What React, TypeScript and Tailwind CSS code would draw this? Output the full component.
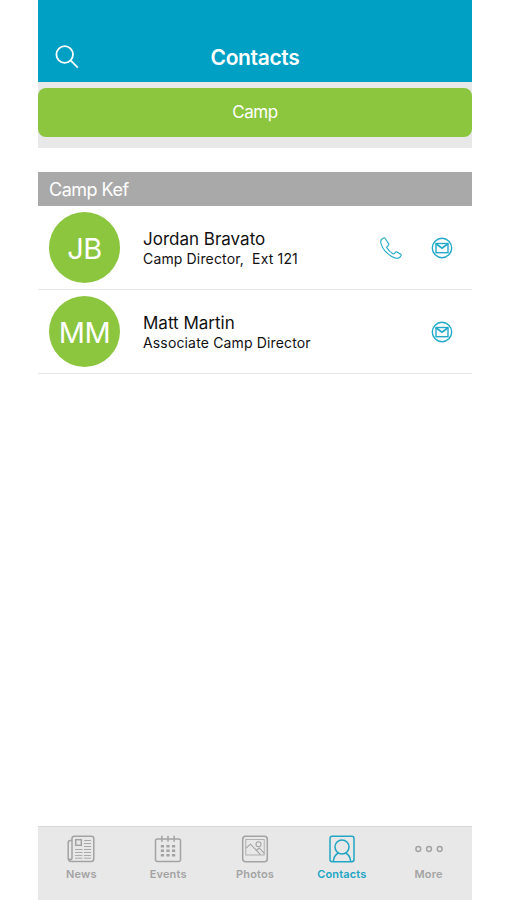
import type { ReactNode } from 'react';

type Contact = {
  initials: string;
  name: string;
  title: string;
  hasPhone: boolean;
};

const contacts: Contact[] = [
  { initials: 'JB', name: 'Jordan Bravato', title: 'Camp Director,  Ext 121', hasPhone: true },
  { initials: 'MM', name: 'Matt Martin', title: 'Associate Camp Director', hasPhone: false },
];

function SearchIcon() {
  return (
    <svg className="w-6 h-6" viewBox="0 0 24 24" fill="none" stroke="currentColor" strokeWidth="1.8">
      <circle cx="9.7" cy="9.5" r="8.3" />
      <path d="M15.6 15.4l7.2 7.2" />
    </svg>
  );
}

function PhoneIcon() {
  return (
    <svg className="w-[22px] h-[22px]" viewBox="0 0 22 22" fill="none" stroke="currentColor" strokeWidth="1.1" strokeLinejoin="round">
      <path d="M3.7.9C1.5 1.6.4 3.2.8 5.5c.7 3.6 3 7.4 5.9 10.2 2.5 2.4 5.8 4.6 8.8 5.4 2.3.6 4.5-.5 5.6-2.7.2-.5 0-.9-.4-1.2l-3.700-2.200c-.5-.3-1-.2-1.400.2l-1.300 1.500c-.4.400-.9.400-1.400.1-2.500-1.500-4.600-3.600-6-6-.3-.5-.2-1 .2-1.300l1.400-1.200c.4-.4.500-.9.200-1.400L5 1.300C4.700.9 4.200.7 3.700.9z" />
    </svg>
  );
}

function MailIcon() {
  return (
    <svg className="w-[22px] h-[22px]" viewBox="0 0 22 22" fill="none" stroke="currentColor" strokeWidth="1.4">
      <circle cx="11" cy="11" r="9.7" />
      <rect x="5" y="6.5" width="12" height="9.2" />
      <path d="M5 6.7l6 4.500 6-4.500" strokeWidth="1.7" />
    </svg>
  );
}

function NewsIcon() {
  return (
    <svg className="w-7 h-7" viewBox="0 0 28 28" fill="none" stroke="currentColor" strokeWidth="1.5">
      <path d="M5 5.5H3.2Q1.2 5.5 1.2 8v15.5a3 3 0 0 0 3 3H24q2.800 0 2.800-2.800V3.500Q26.800 1.200 24.500 1.200H7.400Q5 1.200 5 3.500v19.200a1.900 1.900 0 0 1-3.800 0" />
      <rect x="8.7" y="4.7" width="5.6" height="5.6" />
      <path d="M17 5.500h7M17 8.500h7M17 11.500h7M8 14.500h7.500M17 14.500h7M8 17.500h7.500M17 17.500h7M8 20.500h7.500M17 20.500h7M8 23.200h7.500M17 23.200h7" strokeWidth="0.9" />
    </svg>
  );
}

function EventsIcon() {
  return (
    <svg className="w-7 h-7" viewBox="0 0 28 28" fill="none" stroke="currentColor" strokeWidth="1.5">
      <rect x="1.5" y="4" width="25" height="22.5" rx="2" />
      <path d="M7.8.8v6M14 .8v6M20.2.8v6" />
      <path d="M6.800 11.200h3.200M12.400 11.200h3.200M18 11.200h3.200M6.800 15.700h3.200M12.400 15.700h3.200M18 15.700h3.200M6.800 20.200h3.200M12.400 20.200h3.200M18 20.200h3.200" strokeWidth="2.4" />
    </svg>
  );
}

function PhotosIcon() {
  return (
    <svg className="w-7 h-7" viewBox="0 0 28 28" fill="none" stroke="currentColor" strokeWidth="1.5">
      <rect x="1.7" y="1.2" width="24.6" height="25.6" rx="3" />
      <rect x="4.8" y="4.5" width="18.4" height="15.5" strokeWidth="0.8" />
      <circle cx="17.5" cy="9.3" r="2.5" strokeWidth="1.1" />
      <path d="M5 13.2l4.500-4 10 10.500M15.500 15.200l2.800-2.200 4.900 5.300" strokeWidth="1.1" />
    </svg>
  );
}

function ContactsIcon() {
  return (
    <svg className="w-7 h-7" viewBox="0 0 28 28" fill="none" stroke="currentColor" strokeWidth="1.5">
      <rect x="2" y="1.2" width="24" height="25.6" rx="2.2" />
      <circle cx="14" cy="12" r="7" />
      <path d="M5.300 26.500c.4-4.600 2.200-7 5.200-8.500M22.700 26.500c-.4-4.600-2.200-7-5.200-8.500" />
    </svg>
  );
}

function MoreIcon() {
  return (
    <svg className="w-7 h-7" viewBox="0 0 28 28" fill="none" stroke="currentColor" strokeWidth="1.5">
      <circle cx="3.3" cy="14" r="2.4" />
      <circle cx="14" cy="14" r="2.4" />
      <circle cx="24.7" cy="14" r="2.4" />
    </svg>
  );
}

const tabs: { label: string; icon: ReactNode; active?: boolean }[] = [
  { label: 'News', icon: <NewsIcon /> },
  { label: 'Events', icon: <EventsIcon /> },
  { label: 'Photos', icon: <PhotosIcon /> },
  { label: 'Contacts', icon: <ContactsIcon />, active: true },
  { label: 'More', icon: <MoreIcon /> },
];

function ContactRow({ contact }: { contact: Contact }) {
  return (
    <li className="flex items-center h-[84px] pl-[11px] pr-[19px] border-b border-[#e6e6e6]">
      <div className="w-[71px] h-[71px] shrink-0 rounded-full bg-[#8cc63f] text-white text-[29px] tracking-[-0.4px] pt-0.5 flex items-center justify-center">
        {contact.initials}
      </div>
      <div className="ml-[23px] pt-px flex-1 text-[#111111]">
        <h2 className="text-[17px] leading-[22px]">{contact.name}</h2>
        <p className="text-[14px] leading-[18px] tracking-[0.15px] whitespace-pre">{contact.title}</p>
      </div>
      <div className="flex items-center gap-[29px] text-[#22a9ca]">
        {contact.hasPhone && <PhoneIcon />}
        <MailIcon />
      </div>
    </li>
  );
}

export default function App() {
  return (
    <div className="h-screen bg-white font-['Inter','Liberation_Sans',sans-serif]">
      <div className="w-[434px] h-full ml-[38px] flex flex-col">
        <header className="h-[82px] shrink-0 bg-[#009fc4] text-white grid grid-cols-3 items-end px-[17px] pb-[11px]">
          <button className="w-6 h-6 mb-0.5">
            <SearchIcon />
          </button>
          <h1 className="text-[21px] leading-[27px] font-semibold tracking-[-0.35px] text-center">Contacts</h1>
        </header>

        <div className="bg-[#e8e8e8] pt-1.5 pb-[11px]">
          <button className="w-full h-[49px] pt-px rounded-lg bg-[#8cc63f] text-white text-[17px] tracking-[-0.5px]">Camp</button>
        </div>

        <main className="flex-1 pt-6">
          <div className="h-[34px] bg-[#a9a9a9] text-white text-[18px] tracking-[-0.5px] flex items-center px-[11px]">Camp Kef</div>
          <ul>
            {contacts.map(contact => (
              <ContactRow key={contact.name} contact={contact} />
            ))}
          </ul>
        </main>

        <nav className="h-[74px] shrink-0 grid grid-cols-5 bg-[#e8e8e8] border-t border-[#d8d8d8]">
          {tabs.map(tab => (
            <button
              key={tab.label}
              className={`flex flex-col items-center pt-2 ${tab.active ? 'text-[#21a5c4]' : 'text-[#a3a3a3]'}`}
            >
              {tab.icon}
              <span className="mt-1 text-[11px] leading-[14px] font-semibold tracking-[0.15px]">{tab.label}</span>
            </button>
          ))}
        </nav>
      </div>
    </div>
  );
}
